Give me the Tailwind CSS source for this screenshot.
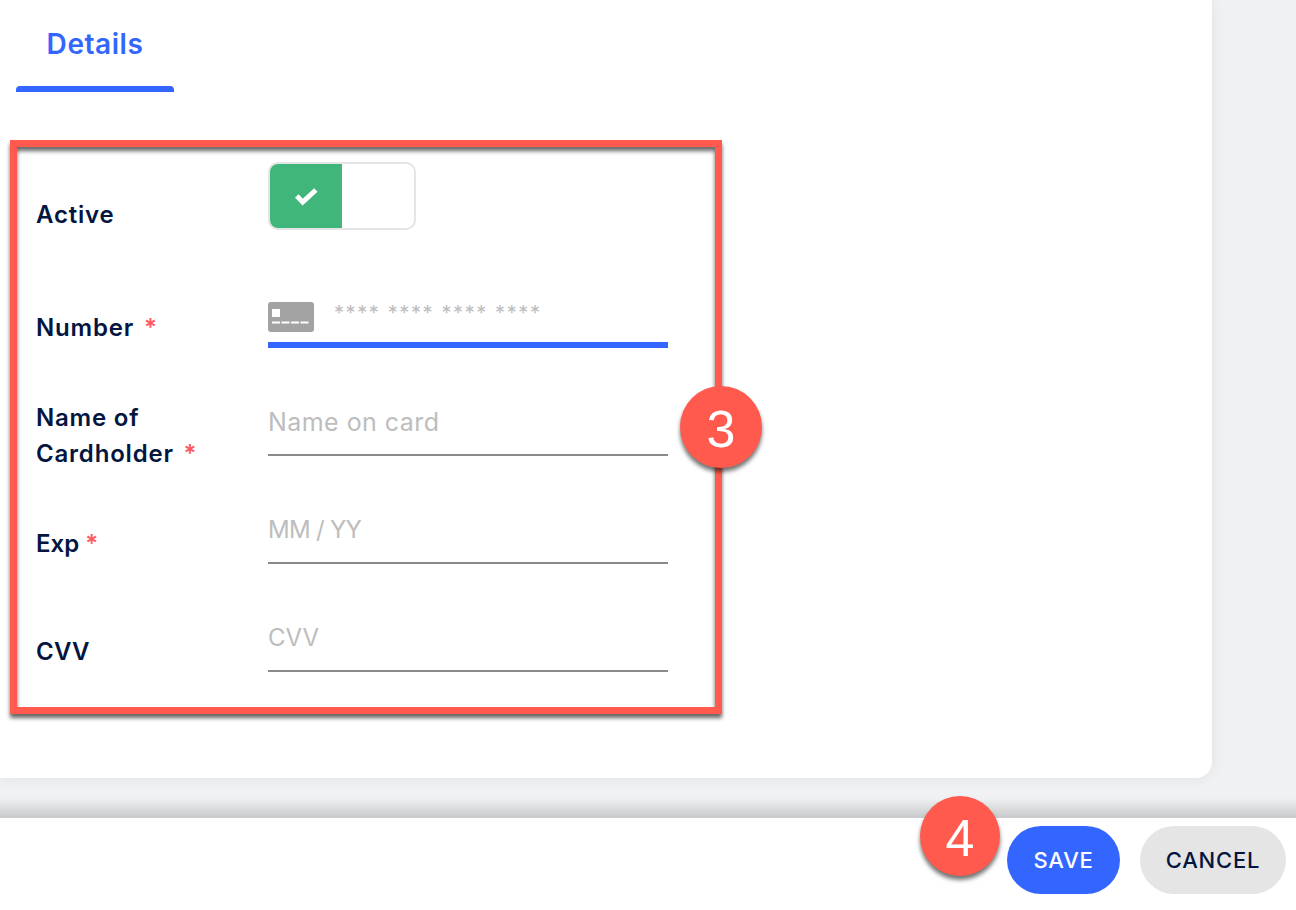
<!DOCTYPE html>
<html lang="en">
<head>
<meta charset="UTF-8">
<title>Payment card details</title>
<script src="https://cdn.jsdelivr.net/npm/@tailwindcss/browser@4"></script>
</head>
<body class="w-[1296px] h-[910px] overflow-hidden relative bg-[#f0f1f3] font-['Inter',sans-serif]">

<div class="h-[818px] bg-gradient-to-b from-[#f0f1f3] from-[97.6%] to-[#c8c9cb]">
  <main class="w-[1212px] h-[778px] bg-white rounded-br-[16px] shadow-[0_0_14px_rgba(0,0,0,0.07)]">
    <nav class="h-[92px] pl-[16px]">
      <div class="w-[158px] h-[92px] flex flex-col items-center">
        <span class="h-[86px] pt-[26px] text-[28px] leading-[36px] tracking-[0.55px] font-semibold text-[#3366ff]">Details</span>
        <span class="w-full h-[6px] bg-[#3366ff] rounded-t-[4px]"></span>
      </div>
    </nav>

    <form class="pl-[36px] pt-[40px]">
      <div class="flex h-[108px]">
        <label class="w-[232px] pt-[65px] text-[24px] leading-[36px] tracking-[0.8px] font-semibold text-[#041640]">Active</label>
        <div class="w-[148px] h-[68px] mt-[30px] flex border-2 border-[#e4e5e6] rounded-[10px] overflow-hidden">
          <div class="w-[72px] bg-[#41b67a] flex items-center justify-center">
            <svg width="24" height="20" viewBox="0 0 22 18"><path d="M2.500 9l5.500 5.500L20 3.500" fill="none" stroke="#fff" stroke-width="4.500"/></svg>
          </div>
        </div>
      </div>

      <div class="flex h-[108px]">
        <label class="w-[232px] pt-[70px] text-[24px] leading-[36px] tracking-[0.8px] font-semibold text-[#041640]">Number <span class="text-[#ff5a5f] ml-[3px]">*</span></label>
        <div class="w-[400px] h-[108px] flex flex-col justify-end">
          <div class="flex items-start h-[46px] gap-[20px] pt-[6px]">
            <svg width="46" height="30" viewBox="0 0 46 30"><rect width="46" height="30" rx="3" fill="#a3a3a3"/><rect x="4" y="7" width="8" height="8" fill="#fff"/><path d="M4 20.500h38" stroke="#fff" stroke-width="2" stroke-dasharray="8 1.500"/></svg>
            <span class="text-[20px] leading-[20px] tracking-[1.6px] text-[#bdbdbd] pt-[1px]">**** **** **** ****</span>
          </div>
          <div class="h-[6px] bg-[#3366ff]"></div>
        </div>
      </div>

      <div class="flex h-[108px]">
        <label class="w-[232px] pt-[52px] text-[24px] leading-[36px] tracking-[0.8px] font-semibold text-[#041640]">Name of<br>Cardholder <span class="text-[#ff5a5f] ml-[3px]">*</span></label>
        <div class="w-[400px] h-[108px] flex flex-col justify-end">
          <span class="h-[50px] text-[25px] leading-[36px] tracking-[0.45px] text-[#bdbdbd]">Name on card</span>
          <div class="h-[2px] bg-[#8a8a8a]"></div>
        </div>
      </div>

      <div class="flex h-[108px]">
        <label class="w-[232px] pt-[70px] text-[24px] leading-[36px] font-semibold text-[#041640]">Exp <span class="text-[#ff5a5f]">*</span></label>
        <div class="w-[400px] h-[108px] flex flex-col justify-end">
          <span class="h-[50px] text-[24px] leading-[36px] tracking-[-0.7px] text-[#bdbdbd]">MM / YY</span>
          <div class="h-[2px] bg-[#8a8a8a]"></div>
        </div>
      </div>

      <div class="flex h-[108px]">
        <label class="w-[232px] pt-[70px] text-[24px] leading-[36px] tracking-[0.2px] font-semibold text-[#041640]">CVV</label>
        <div class="w-[400px] h-[108px] flex flex-col justify-end">
          <span class="h-[50px] text-[24px] leading-[36px] text-[#bdbdbd]">CVV</span>
          <div class="h-[2px] bg-[#8a8a8a]"></div>
        </div>
      </div>
    </form>
  </main>
</div>

<footer class="h-[92px] bg-white flex justify-end items-start gap-[20px] pt-[8px] pr-[10px]">
  <button class="w-[113px] h-[68px] rounded-full bg-[#3366ff] text-white text-[22px] tracking-[0.8px] font-medium">SAVE</button>
  <button class="w-[146px] h-[68px] rounded-full bg-[#e5e5e5] text-[#041640] text-[22px] tracking-[0.8px] font-medium">CANCEL</button>
</footer>

<!-- annotation overlays -->
<div class="absolute left-[10px] top-[140px] w-[712px] h-[574px] border-[7px] border-[#ff5a4d] shadow-[0_4px_4px_rgba(0,0,0,0.6),inset_0_4px_4px_rgba(0,0,0,0.6)]"></div>
<div class="absolute left-[680px] top-[386px] w-[82px] h-[82px] pt-[4px] rounded-full bg-[#ff5a4d] shadow-[0_4px_4px_rgba(0,0,0,0.55)] flex items-center justify-center text-white text-[52px] font-['Liberation_Sans',sans-serif]">3</div>
<div class="absolute left-[920px] top-[796px] w-[80px] h-[80px] pt-[4px] rounded-full bg-[#ff5a4d] shadow-[0_4px_4px_rgba(0,0,0,0.55)] flex items-center justify-center text-white text-[52px] font-['Liberation_Sans',sans-serif]">4</div>
</body>
</html>
